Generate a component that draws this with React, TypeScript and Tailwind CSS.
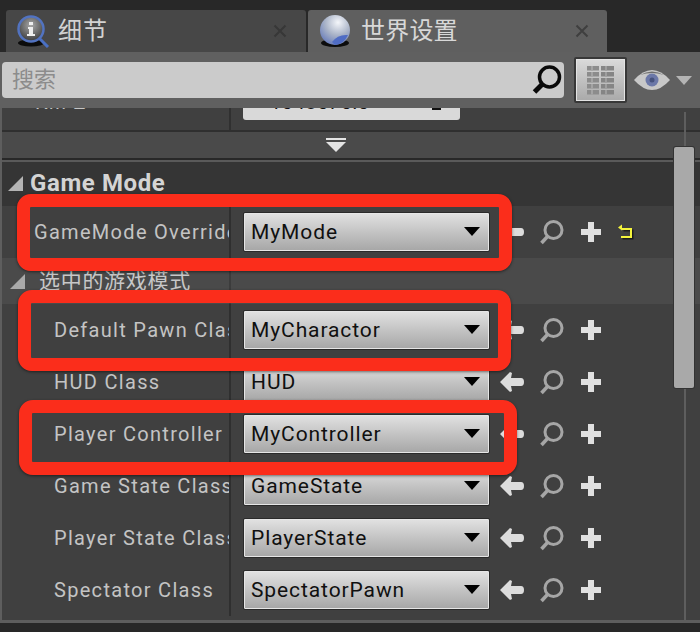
import React from 'react';

const font = "font-['Roboto','Noto_Sans_CJK_SC',sans-serif]";

const ArrowIcon = () => (
  <svg width="26" height="24" viewBox="0 0 26 24" className="shrink-0">
    <path d="M1 12 L11 2 L13 3 L12 8 H22 Q25 8 25 12 Q25 16 22 16 H12 L13 21 L11 22 Z" fill="#dcdcdc" />
  </svg>
);

const FindIcon = () => (
  <svg width="26" height="26" viewBox="0 0 26 26" className="shrink-0">
    <circle cx="14.5" cy="11" r="8.5" fill="none" stroke="#a6a6a6" strokeWidth="3" />
    <path d="M8.5 17.5 L2.5 24" stroke="#a6a6a6" strokeWidth="3.5" />
  </svg>
);

const PlusIcon = () => (
  <svg width="22" height="22" viewBox="0 0 22 22" className="shrink-0">
    <path d="M8 1 H14 V8 H21 V14 H14 V21 H8 V14 H1 V8 H8 Z" fill="#e0e0e0" />
  </svg>
);

const ResetIcon = () => (
  <svg width="17" height="16" viewBox="0 0 17 16" className="shrink-0">
    <path d="M5 5 H14 V13 H4" fill="none" stroke="#1c1c1c" strokeWidth="2" transform="translate(1.5 1.5)" />
    <path d="M5 5 H14 V13 H4" fill="none" stroke="#f4f43c" strokeWidth="2" />
    <path d="M1 3.5 L5 0.5 V6.5 Z" fill="#f4f43c" />
  </svg>
);

const Caret = () => (
  <svg width="16" height="10" viewBox="0 0 16 10" className="shrink-0">
    <path d="M0 0 H16 L8 9 Z" fill="#000" />
  </svg>
);

const Collapse = ({ color = '#a9a9a9' }: { color?: string }) => (
  <svg width="15" height="15" viewBox="0 0 15 15" className="shrink-0">
    <path d="M15 0 V15 H0 Z" fill={color} />
  </svg>
);

const Dropdown = ({ value }: { value: string }) => (
  <div className="flex h-[40px] w-[247px] items-center justify-between rounded-[2px] border border-[#2a2a2a] bg-gradient-to-b from-[#e2e2e2] to-[#a6a6a6] pl-[7px] pr-[9px] shadow-[inset_0_0_0_1px_#e6e6e6]">
    <span className="text-[21px] leading-none tracking-[0.9px] text-[#101010]">{value}</span>
    <Caret />
  </div>
);

const Row = ({ label, value, reset, indent = true }: { label: string; value: string; reset?: boolean; indent?: boolean }) => (
  <div className="flex h-[52px] items-center">
    <div className={`flex h-full w-[229px] shrink-0 items-center overflow-hidden border-r-2 border-[#2f2f2f] ${indent ? 'pl-[52px]' : 'pl-[32px]'}`}>
      <span className="whitespace-nowrap text-[20px] tracking-[1.3px] text-[#c4c4c4]">{label}</span>
    </div>
    <div className="ml-[12px]"><Dropdown value={value} /></div>
    <div className="ml-[9px] flex items-center">
      <ArrowIcon />
      <div className="ml-[14px]"><FindIcon /></div>
      <div className="ml-[15px]"><PlusIcon /></div>
      {reset && <div className="ml-[15px]"><ResetIcon /></div>}
    </div>
  </div>
);

const InfoIcon = () => (
  <svg width="34" height="34" viewBox="0 0 34 34" className="shrink-0">
    <defs>
      <radialGradient id="infoFill" cx="0.5" cy="0.35" r="0.7">
        <stop offset="0" stopColor="#a8a8a8" />
        <stop offset="1" stopColor="#333" />
      </radialGradient>
    </defs>
    <ellipse cx="15" cy="29" rx="13" ry="3.5" fill="#0c0c0c" />
    <path d="M23 24 L32 33" stroke="#4a70c4" strokeWidth="3" />
    <circle cx="15" cy="15" r="12.5" fill="url(#infoFill)" stroke="#5273c0" strokeWidth="2.5" />
    <rect x="13" y="8" width="4" height="3" fill="#eee" />
    <path d="M12 13 H17 V20 H19 V22 H11 V20 H13 V15 H12 Z" fill="#eee" />
  </svg>
);

const GlobeIcon = () => (
  <svg width="34" height="34" viewBox="0 0 34 34" className="shrink-0">
    <defs>
      <radialGradient id="globeFill" cx="0.6" cy="0.25" r="0.85">
        <stop offset="0" stopColor="#f4f6fa" />
        <stop offset="0.5" stopColor="#aab4c8" />
        <stop offset="1" stopColor="#5c72b8" />
      </radialGradient>
    </defs>
    <ellipse cx="17" cy="29" rx="14" ry="4" fill="#0c0c0c" />
    <circle cx="17" cy="16" r="15" fill="url(#globeFill)" />
    <path d="M14 28 Q20 20 30 21 Q26 30 17 31 Z" fill="#4f6cc4" />
  </svg>
);

const CloseX = () => (
  <svg width="14" height="14" viewBox="0 0 14 14" className="shrink-0">
    <path d="M1.5 1.5 L12.5 12.5 M12.5 1.5 L1.5 12.5" stroke="#2f2f2f" strokeWidth="2" opacity="0.65" />
  </svg>
);

const SearchIcon = () => (
  <svg width="32" height="32" viewBox="0 0 32 32" className="shrink-0">
    <circle cx="18.5" cy="13" r="10" fill="none" stroke="#0a0a0a" strokeWidth="3.5" />
    <path d="M11 20.5 L3.5 28" stroke="#0a0a0a" strokeWidth="5" />
  </svg>
);

const GridIcon = () => (
  <svg width="27" height="29" viewBox="0 0 27 29">
    {[0, 6, 12, 18, 24].map((y) => (
      <g key={y}>
        <rect x="0" y={y} width="12" height="4.5" fill="#8c8c8c" />
        <rect x="4" y={y} width="2" height="4.5" fill="#a4a4a4" />
        <rect x="14" y={y} width="13" height="4.5" fill="#858585" />
        <rect x="18" y={y} width="2" height="4.5" fill="#9e9e9e" />
      </g>
    ))}
  </svg>
);

const EyeIcon = () => (
  <svg width="36" height="22" viewBox="0 0 36 22" className="shrink-0">
    <path d="M0 11 Q9 1 18 1 Q27 1 36 11 Q27 21 18 21 Q9 21 0 11 Z" fill="#c8c8c8" />
    <path d="M6 6 Q18 -1 30 6 Q18 2 6 6 Z" fill="#6e6e6e" />
    <circle cx="18" cy="11" r="6.5" fill="#6c78a8" />
    <circle cx="18" cy="11" r="2.5" fill="#46527e" />
  </svg>
);

const Highlight = ({ className }: { className: string }) => (
  <div className={`absolute rounded-[14px] border-[13px] border-[#fb2d1b] shadow-[0_1px_3px_rgba(0,0,0,0.5)] ${className}`} />
);

export default function App() {
  return (
    <div className={`${font} relative h-[632px] w-[700px] overflow-hidden bg-[#282828]`}>
      {/* tab well */}
      <div className="flex h-[52px] items-end pl-[6px]">
        <div className="flex h-[42px] w-[300px] items-center rounded-t-[3px] bg-[#474747] pl-[10px] pr-[19px]">
          <InfoIcon />
          <span className="ml-[8px] text-[24px] leading-none tracking-[1px] text-[#d2d2d2]">细节</span>
          <div className="ml-auto"><CloseX /></div>
        </div>
        <div className="ml-[2px] flex h-[42px] w-[299px] items-center rounded-t-[3px] bg-[#5f5f5f] pl-[10px] pr-[18px]">
          <GlobeIcon />
          <span className="ml-[9px] text-[24px] leading-none tracking-[0.2px] text-[#d8d8d8]">世界设置</span>
          <div className="ml-auto"><CloseX /></div>
        </div>
      </div>

      {/* search toolbar */}
      <div className="flex h-[56px] items-center bg-[#606060] pl-[2px]">
        <div className="flex h-[36px] w-[562px] items-center justify-between rounded-[4px] bg-[#cbcbcb] pl-[10px] pr-[1px]">
          <span className="text-[22px] leading-none text-[#8c8c8c]">搜索</span>
          <SearchIcon />
        </div>
        <div className="ml-[10px] flex h-[46px] w-[53px] items-center justify-center rounded-[2px] border-2 border-[#383838] bg-gradient-to-b from-[#dadada] to-[#a9a9a9] shadow-[inset_0_0_0_1px_#e4e4e4]">
          <GridIcon />
        </div>
        <div className="ml-[7px]"><EyeIcon /></div>
        <svg width="16" height="9" viewBox="0 0 16 9" className="ml-[6px] shrink-0">
          <path d="M0 0 H16 L8 9 Z" fill="#b4b4b4" />
        </svg>
      </div>

      <div className="border-l-2 border-[#5e5e5e]">
        {/* row scrolled under the toolbar */}
        <div className="flex h-[24px] overflow-hidden border-b-2 border-[#2f2f2f] bg-[#404040]">
          <div className="h-full w-[229px] shrink-0 overflow-hidden border-r-2 border-[#303030] pl-[33px]">
            <span className="-mt-[18px] block text-[20px] leading-[24px] tracking-[1.3px] text-[#c4c4c4]">Kill Z</span>
          </div>
          <div className="ml-[12px] flex h-[12px] w-[217px] justify-between overflow-hidden rounded-b-[3px] bg-[#d9d9d9] pl-[21px] pr-[19px]">
            <span className="-mt-[18px] block text-[20px] leading-[24px] tracking-[0.5px] text-[#111]">-1048575.0</span>
            <div className="h-[2px] w-[9px] bg-[#111]" />
          </div>
        </div>

        {/* advanced expander */}
        <div className="flex h-[26px] items-center justify-center bg-[#4a4a4a] pr-[2px]">
          <div className="ml-[-28px] flex flex-col items-center">
            <div className="h-[2px] w-[20px] bg-[#e4e4e4]" />
            <svg width="20" height="10" viewBox="0 0 20 10" className="mt-[2px]">
              <path d="M0 0 H20 L10 10 Z" fill="#e4e4e4" />
            </svg>
          </div>
        </div>

        {/* Game Mode category */}
        <div className="mt-[2px] flex h-[46px] items-center gap-[7px] border-t-2 border-[#5a5a5a] bg-[#353535] pb-[2px] pl-[6px]">
          <Collapse color="#b4b4b4" />
          <span className="text-[24px] font-bold leading-none tracking-[0.6px] text-[#d4d4d4]">Game Mode</span>
        </div>
        <div className="bg-[#404040] pb-[4px]">
          <Row label="GameMode Override" value="MyMode" reset indent={false} />
          <div className="flex h-[46px] items-center bg-[#4a4a4a]">
            <div className="flex h-full w-[229px] shrink-0 items-center border-r-2 border-[#3c3c3c] pl-[8px]">
              <Collapse />
              <span className="ml-[14px] whitespace-nowrap text-[21px] leading-none tracking-[0.7px] text-[#c8c8c8]">选中的游戏模式</span>
            </div>
          </div>
          <Row label="Default Pawn Class" value="MyCharactor" />
          <Row label="HUD Class" value="HUD" />
          <Row label="Player Controller Class" value="MyController" />
          <Row label="Game State Class" value="GameState" />
          <Row label="Player State Class" value="PlayerState" />
          <Row label="Spectator Class" value="SpectatorPawn" />
        </div>
        <div className="h-[3px] bg-[#5e5e5e]" />
      </div>

      {/* scroll bar */}
      <div className="absolute left-[684px] top-[112px] h-[508px] w-[2px] bg-[#5e5e5e]" />
      <div className="absolute left-[674px] top-[147px] h-[241px] w-[20px] rounded-[2px] bg-[#a9a9a9] shadow-[0_0_0_1px_#333]" />

      {/* annotation boxes */}
      <Highlight className="left-[17px] top-[194px] h-[77px] w-[495px]" />
      <Highlight className="left-[18px] top-[290px] h-[81px] w-[493px]" />
      <Highlight className="left-[19px] top-[400px] h-[75px] w-[498px]" />
    </div>
  );
}
